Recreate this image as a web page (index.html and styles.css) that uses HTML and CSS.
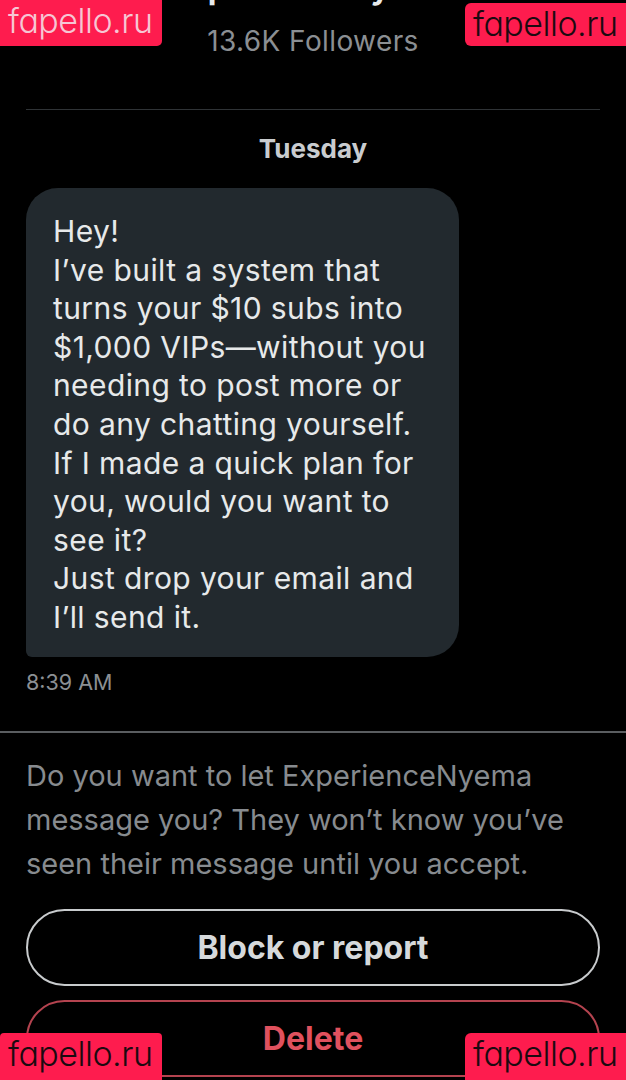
FILE: index.html
```html
<!DOCTYPE html>
<html lang="en">
<head>
<meta charset="utf-8">
<title>Message request</title>
<link rel="stylesheet" href="styles.css">
</head>
<body>
<main class="screen">
  <header class="profile">
    <div class="name">ExperienceNyema</div>
    <div class="followers">13.6K Followers</div>
  </header>
  <hr class="divider">
  <div class="day">Tuesday</div>
  <div class="bubble">Hey!<br>I’ve built a system that turns your $10 subs into $1,000 VIPs—without you needing to post more or do any chatting yourself.<br>If I made a quick plan for you, would you want to see it?<br>Just drop your email and I’ll send it.</div>
  <div class="time">8:39 AM</div>
  <section class="request">
    <p class="prompt">Do you want to let ExperienceNyema message you? They won’t know you’ve seen their message until you accept.</p>
    <div class="actions">
      <button class="btn btn-block">Block or report</button>
      <button class="btn btn-delete">Delete</button>
    </div>
  </section>
</main>
<div class="wm wm-tl">fapello.ru</div>
<div class="wm wm-tr">fapello.ru</div>
<div class="wm wm-bl">fapello.ru</div>
<div class="wm wm-br">fapello.ru</div>
</body>
</html>
```
FILE: styles.css
```css
* { box-sizing: border-box; }
html, body {
  margin: 0;
  padding: 0;
  background: #000;
  width: 626px;
  height: 1080px;
  overflow: hidden;
}
body {
  font-family: "Inter", "Roboto", sans-serif;
  color: #e7e9ea;
  position: relative;
}
.screen {
  padding: 0 26px;
}
.profile {
  text-align: center;
  margin-top: -32px;
}
.name {
  font-size: 32px;
  font-weight: 700;
  line-height: 40px;
  height: 40px;
  color: #e7e9ea;
}
.followers {
  font-size: 28px;
  line-height: 34px;
  color: #8b8f93;
  letter-spacing: 0.4px;
  margin-top: 16px;
}
.divider {
  border: 0;
  height: 1px;
  background: #2f3336;
  margin: 51px 0 0;
}
.day {
  text-align: center;
  font-size: 26px;
  font-weight: 700;
  color: #c9cccf;
  line-height: 30px;
  margin-top: 24px;
}
.bubble {
  margin-top: 24px;
  width: 433px;
  background: #22292e;
  border-radius: 32px 32px 32px 6px;
  padding: 24px 18px 20px 27px;
  font-size: 30px;
  line-height: 38.6px;
  letter-spacing: 0.4px;
  color: #e7e9ea;
}
.time {
  font-size: 21.5px;
  color: #8b8f93;
  margin-top: 13px;
  line-height: 24px;
}
.request {
  margin: 37px -26px 0;
  border-top: 2px solid #5a5d60;
  padding: 21px 26px 0;
}
.prompt {
  margin: 0;
  font-size: 29px;
  line-height: 44px;
  color: #878b8f;
}
.actions {
  display: flex;
  flex-direction: column;
  gap: 14px;
  margin-top: 23px;
}
.btn {
  font-family: inherit;
  background: transparent;
  height: 77px;
  border-radius: 40px;
  font-size: 32px;
  font-weight: 700;
  width: 100%;
}
.btn-block {
  border: 2px solid #c8cbcd;
  color: #d6d9db;
}
.btn-delete {
  border: 2px solid #b4434f;
  color: #e0515e;
}
.wm {
  position: absolute;
  background: #fe1c4e;
  font-family: "Inter", sans-serif;
  font-feature-settings: "cv11" 1;
  font-weight: 300;
  font-size: 34px;
  line-height: 42px;
  padding: 0 8px;
  letter-spacing: -0.5px;
}
.wm-tl { left: 0; top: 0; width: 162px; height: 46px; color: #f6c6d4; border-radius: 0 0 5px 0; }
.wm-tr { left: 465px; top: 3px; width: 161px; height: 43px; color: #1b0a10; border-radius: 6px 0 0 6px; }
.wm-bl { left: 0; top: 1033px; width: 162px; height: 47px; color: #1b0a10; border-radius: 4px 4px 0 0; }
.wm-br { left: 465px; top: 1033px; width: 161px; height: 47px; color: #1b0a10; border-radius: 6px 0 0 0; }
```
